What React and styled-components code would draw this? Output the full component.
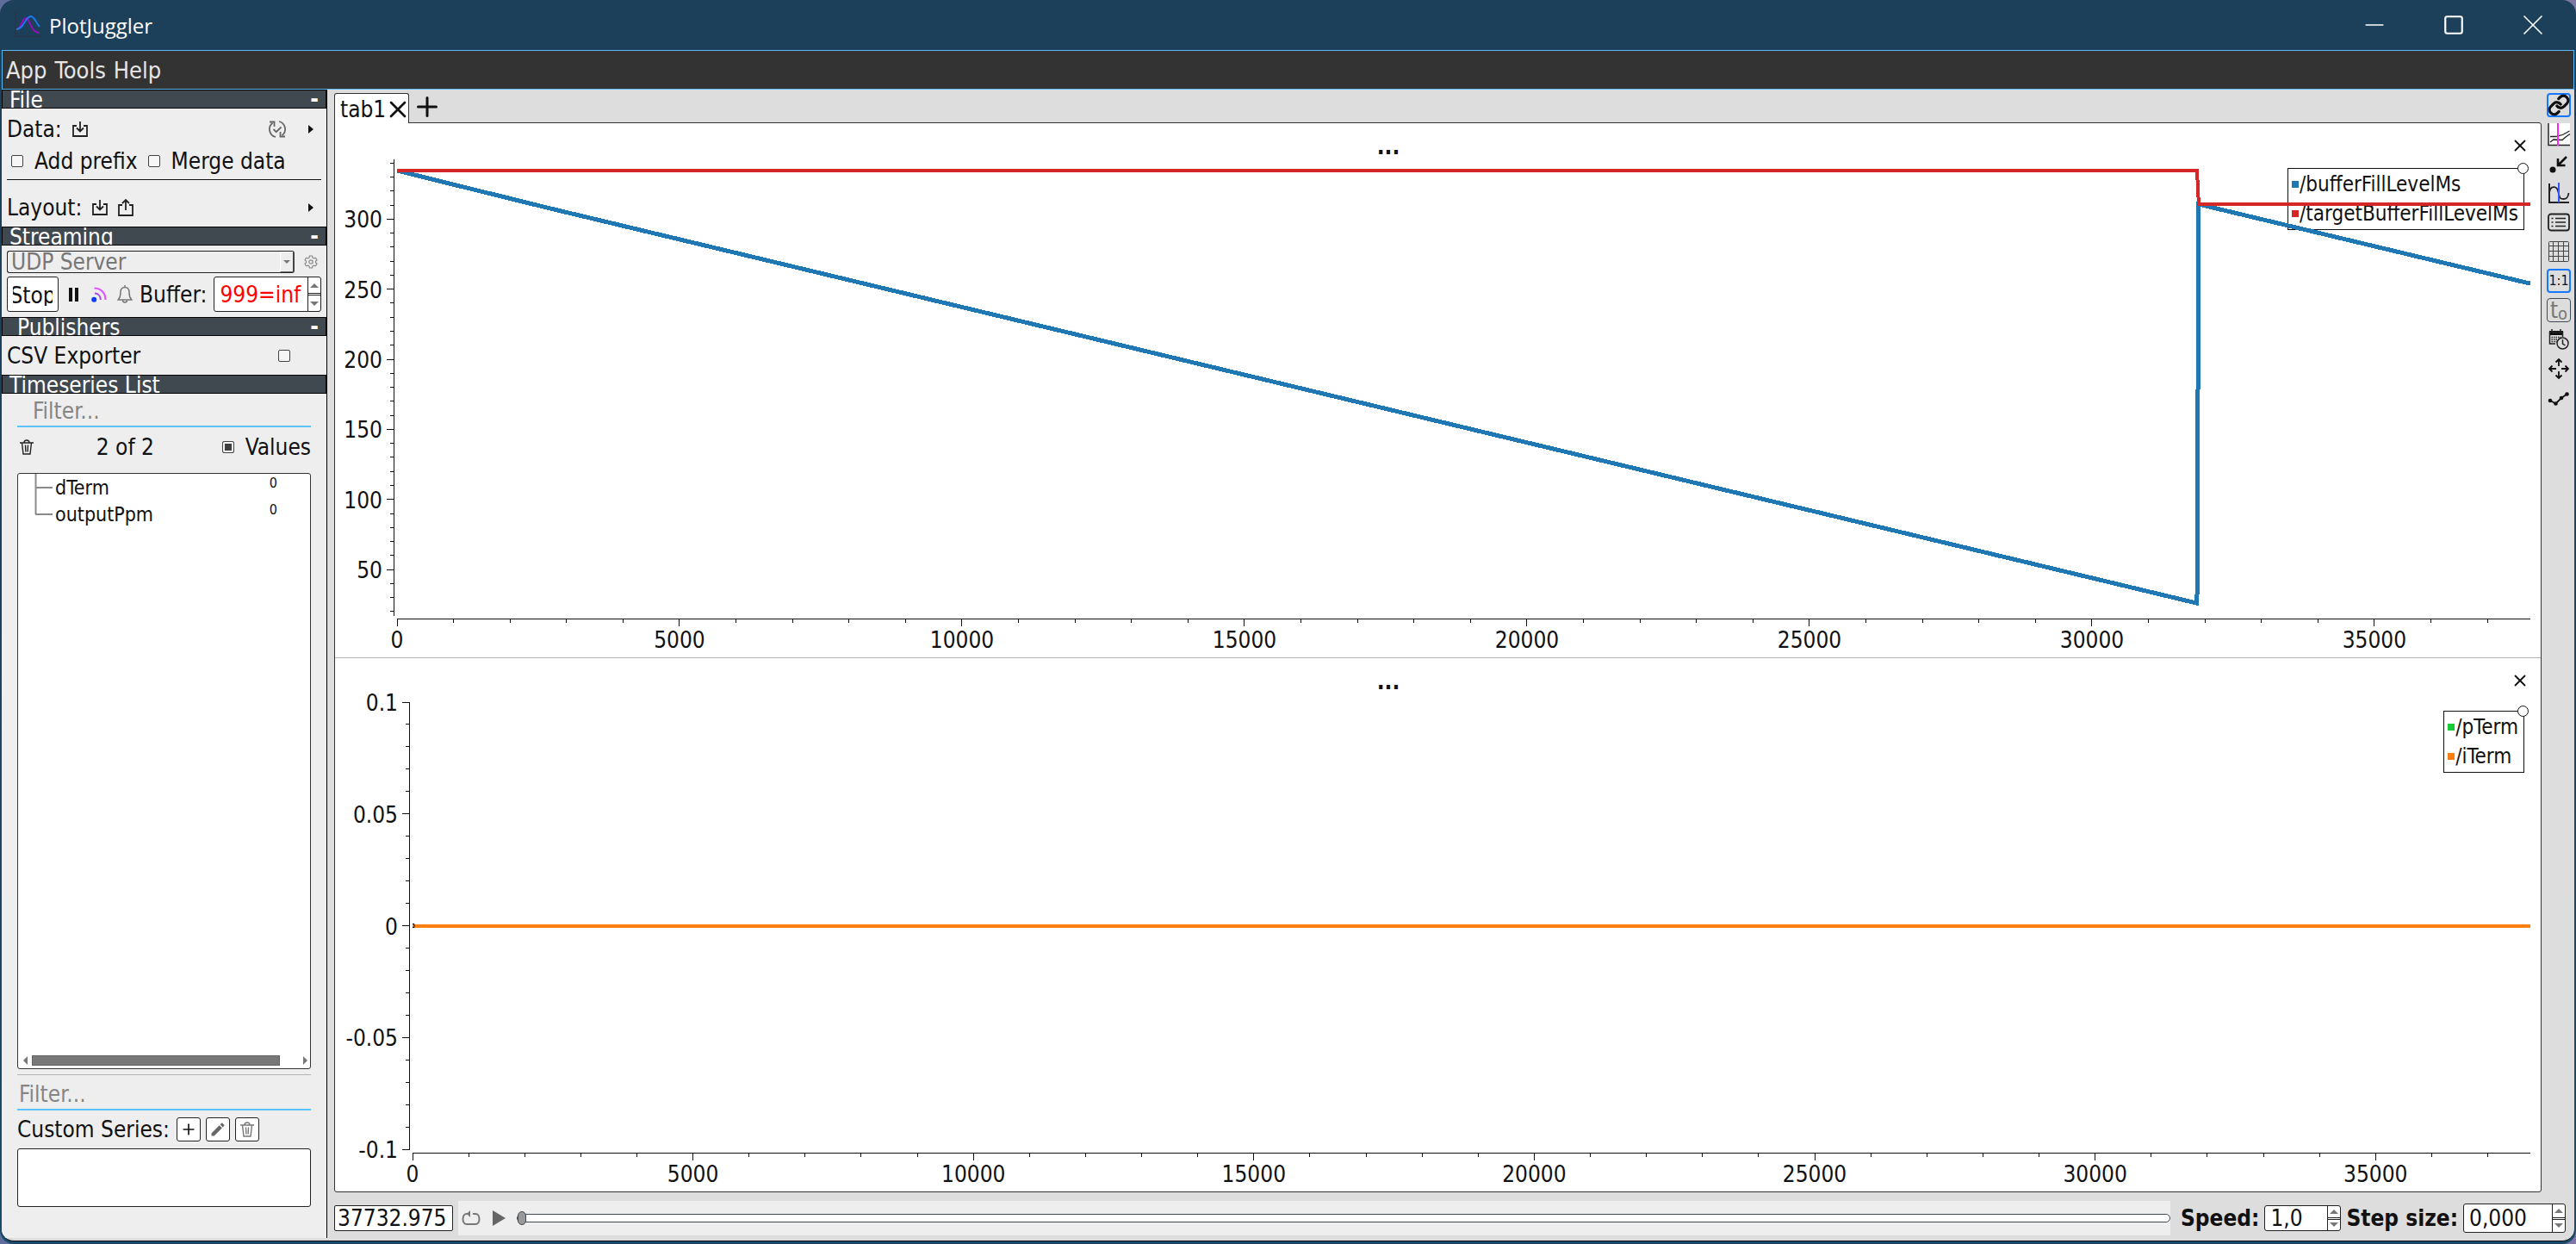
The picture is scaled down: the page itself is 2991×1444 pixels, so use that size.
import React, { useLayoutEffect, useRef, useState } from "react";
import styled, { createGlobalStyle, css } from "styled-components";
import { Link, Minus, Square, X, Plus } from "lucide-react";
import { MdEdit } from "react-icons/md";

const GlobalStyle = createGlobalStyle`
  * {
    box-sizing: border-box;
  }
  body {
    margin: 0;
    background: linear-gradient(90deg, #5f6e9a, #7f76a3);
    color: #111111;
    font-family: "DejaVu Sans Condensed", "Noto Sans", sans-serif;
    font-size: 26px;
    line-height: 32px;
  }
  button, input, select {
    margin: 0;
    color: inherit;
    font: inherit;
  }
`;

const Window = styled.div`
  height: 100vh;
  display: flex;
  flex-direction: column;
  padding: 0 2px 3px;
  border-radius: 16px;
  background: linear-gradient(#1c405a 0, #1c405a 20%, #1a4a6b);
`;

const TitleBar = styled.header`
  height: 58px;
  display: flex;
  align-items: center;
  gap: 7px;
  padding-left: 14px;
  color: #ffffff;
`;

const AppTitle = styled.h1`
  flex: 1;
  margin: 0;
  padding-top: 2px;
  font-family: "Open Sans", "Noto Sans", sans-serif;
  font-size: 24px;
  font-weight: 400;
`;

const IconButton = styled.button`
  display: flex;
  align-items: center;
  justify-content: center;
  padding: 0;
  border: 0;
  background: none;

  svg {
    flex-shrink: 0;
  }
`;

const ControlGroup = styled.div`
  display: flex;
  padding-right: 2px;
`;

const WindowButton = styled(IconButton)`
  width: 92px;
  height: 58px;
`;

const MenuBar = styled.nav`
  height: 46px;
  display: flex;
  align-items: center;
  gap: 9px;
  padding: 2px 4px 0;
  border: 1px solid #5cb8f5;
  background: #333333;
  font-size: 27px;
`;

const MenuItem = styled.button`
  padding: 0;
  border: 0;
  background: none;
  color: #e6e6e6;
`;

const Content = styled.div`
  flex: 1;
  min-height: 0;
  display: flex;
  padding-bottom: 3px;
  border-bottom: 1px solid #111111;
  border-radius: 0 0 14px 14px;
  background: #dddddd;
  overflow: hidden;
`;

const Sidebar = styled.aside`
  width: 378px;
  flex-shrink: 0;
  display: flex;
  flex-direction: column;
  border-right: 1px solid #000000;
  background: #eeeeee;
`;

const SectionHeader = styled.div`
  height: 22px;
  flex-shrink: 0;
  display: flex;
  justify-content: space-between;
  padding: 0 8px;
  padding-left: ${(props) => (props.$indent ? "17px" : "8px")};
  border: 1px solid #000000;
  background: #404850;
  color: #ffffff;
  line-height: 23px;
  overflow: hidden;
`;

const SectionTitle = styled.h2`
  margin: 0;
  font-size: 26px;
  font-weight: 400;
`;

const CollapseButton = styled.button`
  padding: 0;
  border: 0;
  background: none;
  font-weight: 700;
  line-height: 20px;
`;

const SectionBody = styled.div`
  padding: 0 6px;
  padding-bottom: ${(props) => props.$bottom || "0"};
`;

const FileRow = styled.div`
  height: ${(props) => props.$height};
  display: flex;
  align-items: center;
  gap: 12px;
`;

const Spacer = styled.span`
  flex: 1;
`;

const MoreButton = styled.button`
  width: 6px;
  height: 10px;
  margin: 0 9px 0 14px;
  padding: 0;
  border: 5px solid transparent;
  border-left: 6px solid #111111;
  border-right: 0;
  background: none;
`;

const OptionsRow = styled.div`
  height: 26px;
  display: flex;
  align-items: center;
  gap: 12px;
  padding-left: 5px;
`;

const CheckLabel = styled.label`
  display: flex;
  align-items: center;
  gap: 13px;
`;

const Checkbox = styled.input.attrs({ type: "checkbox" })`
  appearance: none;
  width: 14px;
  height: 14px;
  border: 1px solid #444444;
  border-radius: 2px;
  background: #f6f6f6;

  &:checked {
    background: #404040;
    box-shadow: inset 0 0 0 2px #f6f6f6;
  }
`;

const Divider = styled.hr`
  height: 1px;
  margin: 8px 0 10px;
  border: 0;
  background: #111111;
`;

const StreamRow = styled.div`
  display: flex;
  align-items: center;
  gap: 8px;
  padding-top: ${(props) => props.$top};
`;

const SelectBox = styled.div`
  flex: 1;
  display: flex;
  height: 26px;
  border: 1px solid #222222;
  border-right: 2px solid #444444;
  border-radius: 3px;
`;

const SourceSelect = styled.select`
  appearance: none;
  flex: 1;
  min-width: 0;
  height: 24px;
  padding: 0 4px;
  border: 0;
  background: none;
  color: #777777;
  line-height: 24px;
  opacity: 1;
`;

const SelectArrow = styled.span`
  width: 15px;
  display: flex;
  align-items: center;
  justify-content: center;
  border-left: 1px solid #ffffff;
  border-top: 1px solid #ffffff;
  border-bottom: 1px solid #666666;
`;

const Arrow = styled.span`
  width: 0;
  border: ${(props) => props.$size || "5px"} solid transparent;
  ${(props) =>
    props.$up
      ? css`
          border-top: 0;
          border-bottom-color: #777777;
        `
      : css`
          border-bottom: 0;
          border-top-color: #777777;
        `}
`;

const GearButton = styled(IconButton)`
  width: 16px;
  margin: 0 4px 0 3px;
`;

const StopButton = styled.button`
  width: 60px;
  height: 41px;
  display: flex;
  justify-content: center;
  align-items: center;
  padding: 0 6px;
  border: 1px solid #222222;
  border-radius: 3px;
  background: #ffffff;
`;

const StopLabel = styled.span`
  width: 47px;
  height: 26px;
  display: flex;
  justify-content: center;
  line-height: 29px;
  overflow: hidden;
`;

const StreamButtons = styled.div`
  display: flex;
  gap: 12px;
`;

const SmallButton = styled(IconButton)`
  width: 18px;
`;

const SpinBox = styled.div`
  flex: ${(props) => (props.$width ? "none" : "1")};
  width: ${(props) => props.$width || "auto"};
  min-width: 0;
  height: ${(props) => props.$height};
  display: flex;
  border: 1px solid #222222;
  border-radius: 3px;
  background: #ffffff;
`;

const SpinInput = styled.input`
  flex: 1;
  width: 0;
  min-width: 0;
  padding: 0 0 0 6px;
  border: 0;
  background: none;
  color: ${(props) => props.$color || "inherit"};
  outline: 0;
`;

const SpinButtons = styled.div`
  width: 15px;
  display: flex;
  flex-direction: column;
  gap: 1px;
  border-left: 1px solid #222222;
`;

const SpinButton = styled.button`
  flex: 1;
  display: flex;
  align-items: center;
  justify-content: center;
  padding: 0;
  border: 0 solid #222222;
  border-width: ${(props) => (props.$up ? "0 0 1px" : "1px 0 0")};
  background: none;
`;

const PublisherRow = styled.label`
  height: 45px;
  display: flex;
  align-items: center;
  justify-content: space-between;
  padding: 0 36px 0 0;
`;

const ListBody = styled.div`
  flex: 1;
  min-height: 0;
  display: flex;
  flex-direction: column;
  padding: 0 18px 36px;
`;

const FilterInput = styled.input`
  width: 100%;
  height: 39px;
  flex-shrink: 0;
  padding: 2px 0 0 ${(props) => props.$indent};
  border: 0;
  border-bottom: 2px solid #5bc2fb;
  background: none;
  outline: 0;

  &::placeholder {
    color: #858585;
    opacity: 1;
  }
`;

const CountRow = styled.div`
  height: 46px;
  display: flex;
  align-items: center;
  margin-bottom: 7px;
  padding-left: 3px;
`;

const Count = styled.span`
  flex: 1;
  padding-right: 6px;
  text-align: center;
`;

const TreeBox = styled.div`
  flex: 1;
  min-height: 0;
  display: flex;
  flex-direction: column;
  border: 1px solid #333333;
  border-radius: 3px;
  background: #ffffff;
`;

const Tree = styled.ul`
  flex: 1;
  margin: 0;
  padding: 0;
  list-style: none;
  font-size: 23px;
`;

const TreeItem = styled.li`
  height: 31px;
  display: flex;
  align-items: center;
  gap: 2px;
  padding: 0 38px 0 19px;
`;

const TreeValue = styled.span`
  align-self: flex-start;
  margin-left: auto;
  font-size: 16px;
  line-height: 21px;
`;

const ScrollRow = styled.div`
  height: 15px;
  display: flex;
  align-items: center;
  gap: 5px;
  padding: 0 3px 3px 6px;
`;

const ScrollArrow = styled.span`
  border: 5px solid transparent;
  ${(props) =>
    props.$left
      ? css`
          border-left: 0;
          border-right-color: #777777;
        `
      : css`
          border-right: 0;
          border-left-color: #777777;
        `}
`;

const ScrollTrack = styled.div`
  flex: 1;
`;

const ScrollThumb = styled.div`
  width: 93%;
  height: 12px;
  border: 1px solid #606468;
  background: #787878;
`;

const TreeDivider = styled.hr`
  width: 100%;
  height: 1px;
  margin: 6px 0 2px;
  border: 0;
  background: #b4b4b4;
`;

const CustomRow = styled.div`
  display: flex;
  align-items: center;
  gap: 6px;
  padding: 6px 0;
`;

const CustomLabel = styled.span`
  padding-right: 2px;
`;

const SquareButton = styled(IconButton)`
  width: 28px;
  height: 28px;
  border: 1px solid #222222;
  border-radius: 3px;
  background: #ffffff;
`;

const CustomList = styled.div`
  height: 68px;
  flex-shrink: 0;
  border: 1px solid #222222;
  border-radius: 3px;
  background: #ffffff;
`;

const Main = styled.main`
  flex: 1;
  min-width: 0;
  display: flex;
  flex-direction: column;
`;

const Workspace = styled.div`
  flex: 1;
  min-height: 0;
  display: flex;
`;

const Tabs = styled.div`
  flex: 1;
  min-width: 0;
  display: flex;
  flex-direction: column;
  padding-left: 8px;
`;

const TabBar = styled.div`
  height: 38px;
  display: flex;
  align-items: flex-end;
`;

const Tab = styled.div`
  width: 87px;
  height: 35px;
  display: flex;
  align-items: center;
  justify-content: space-between;
  margin-bottom: -1px;
  padding: 2px 2px 0 6px;
  border: 1px solid #333333;
  border-bottom: 0;
  border-radius: 3px 3px 0 0;
  background: #ffffff;
  z-index: 1;
`;

const TabButton = styled.button`
  padding: 0;
  border: 0;
  background: none;
`;

const CloseTabButton = styled(IconButton)`
  width: 20px;
`;

const AddTabButton = styled(IconButton)`
  width: 42px;
  height: 36px;
`;

const Pane = styled.section`
  flex: 1;
  min-height: 0;
  display: flex;
  flex-direction: column;
  border: 1px solid #333333;
  border-radius: 0 3px 3px 3px;
  background: #ffffff;
`;

const PlotPanel = styled.article`
  flex: 1;
  min-height: 0;
  display: flex;
  flex-direction: column;

  & + & {
    border-top: 1px solid #b4b4b4;
  }
`;

const PlotHeader = styled.header`
  height: 40px;
  display: flex;
  align-items: center;
  padding-top: 12px;
`;

const PlotTitle = styled.h3`
  flex: 1;
  margin: 0;
  padding-top: 3px;
  font-size: 26px;
  font-weight: 700;
  line-height: 25px;
  text-align: center;
`;

const PlotActions = styled.div`
  width: 115px;
  display: flex;
  justify-content: flex-end;
  padding-right: 13px;
`;

const ChartBox = styled.div`
  position: relative;
  flex: 1;
  min-height: 0;
`;

const ChartSvg = styled.svg`
  position: absolute;
  inset: 0;
  width: 100%;
  height: 100%;
  font-size: 26px;
  fill: #111111;
`;

const Legend = styled.ul`
  position: absolute;
  top: ${(props) => props.$top}px;
  right: 19px;
  margin: 0;
  padding: 1px 6px 1px 4px;
  border: 1px solid #111111;
  list-style: none;
  font-size: 24px;

  &::after {
    content: "";
    position: absolute;
    top: -7px;
    right: -6px;
    width: 11px;
    height: 11px;
    border: 1px solid #111111;
    border-radius: 50%;
    background: #ffffff;
  }
`;

const LegendItem = styled.li`
  display: flex;
  align-items: center;
  gap: 1px;
  height: 34px;
`;

const Swatch = styled.span`
  width: 8px;
  height: 8px;
  background: ${(props) => props.$color};
`;

const Toolbar = styled.div`
  width: 38px;
  display: flex;
  flex-direction: column;
  align-items: center;
  gap: 6px;
  padding: 4px 0 0 2px;
`;

const ToolButton = styled(IconButton)`
  width: 28px;
  height: 28px;
  border: 0 solid ${(props) => (props.$active ? "#1677ff" : "#3f4a55")};
  border-width: ${(props) =>
    props.$active ? "2px" : props.$framed ? "1px" : "0"};
  border-radius: 4px;
  font-size: 16px;
  color: ${(props) => (props.$framed ? "#777777" : "#111111")};
`;

const Subscript = styled.span`
  display: flex;
  font-size: 26px;
  line-height: 22px;

  sub {
    align-self: flex-end;
    font-size: 20px;
    line-height: 14px;
  }
`;

const PlaybackBar = styled.footer`
  height: 53px;
  display: flex;
  align-items: center;
  gap: 6px;
  padding: 7px 10px 0 8px;
`;

const TimeInput = styled.input`
  width: 138px;
  height: 30px;
  padding: 0 3px;
  border: 1px solid #222222;
  border-radius: 2px;
  background: #ffffff;
`;

const Player = styled.div`
  flex: 1;
  height: 40px;
  display: flex;
  align-items: center;
  gap: 13px;
  padding-left: 4px;
  margin-right: 6px;
  background: #eeeeee;
`;

const TimeSlider = styled.input.attrs({ type: "range" })`
  appearance: none;
  flex: 1;
  height: 16px;
  margin: 0;
  background: none;

  &::-webkit-slider-runnable-track {
    height: 10px;
    border: 1px solid #3f4a55;
    border-radius: 5px;
    background: #ffffff;
  }

  &::-webkit-slider-thumb {
    appearance: none;
    width: 10px;
    height: 16px;
    margin-top: -4px;
    border: 1px solid #3f4a55;
    border-radius: 5px;
    background: #999999;
  }
`;

const BoldLabel = styled.label`
  font-weight: 700;
`;

const LogoIcon = () => (
  <svg width="34" height="34" viewBox="0 0 34 34" fill="none">
    <path d="M2 1v29h30" stroke="#26384b" strokeWidth="2" />
    <path
      d="M3 22c6 0 6-13 11-13s5 17 16 17"
      stroke="#b400c8"
      strokeWidth="1.6"
    />
    <path
      d="M3 22c9 0 10-15 17-15 4 0 6 8 10 12"
      stroke="#1a7cf5"
      strokeWidth="1.8"
    />
  </svg>
);

const ImportIcon = () => (
  <svg width="18" height="18" viewBox="0 0 18 18" fill="none" stroke="#222">
    <path d="M5 5H1v12h16V5h-4" strokeWidth="1.8" />
    <path d="M9 0v11M5 7.5l4 4 4-4" strokeWidth="1.8" />
  </svg>
);

const ExportIcon = () => (
  <svg width="18" height="20" viewBox="0 0 18 20" fill="none" stroke="#222">
    <path d="M5 7H1v12h16V7h-4" strokeWidth="1.8" />
    <path d="M9 13V2M5 5l4-4 4 4" strokeWidth="1.8" />
  </svg>
);

const ReloadIcon = () => (
  <svg width="20" height="20" viewBox="0 0 20 20" fill="none" stroke="#666">
    <path
      d="M8 19A9.200 9.200 0 0 1 4.500 2.800M12 1A9.200 9.200 0 0 1 15.500 17.200"
      strokeWidth="1.8"
    />
    <path d="M1 1.500h5.500V7M19 18.500h-5.500V13" strokeWidth="1.800" />
    <path d="M5.500 10l3.200 3.200L14.500 7.500" strokeWidth="1.8" />
  </svg>
);

const GearIcon = () => (
  <svg width="16" height="16" viewBox="0 0 16 16" fill="none" stroke="#8a8a8a">
    <path
      d="M6.500 1h3l.5 2 1.500.9 2-.6 1.500 2.500-1.500 1.400v1.600l1.500 1.400-1.500 2.500-2-.6-1.500.9-.5 2h-3l-.5-2-1.500-.9-2 .6L1 10.200l1.500-1.400V7.200L1 5.800l1.500-2.500 2 .6L6 3z"
      strokeWidth="1.2"
      strokeLinejoin="round"
    />
    <circle cx="8" cy="8" r="2.200" strokeWidth="1.2" />
  </svg>
);

const PauseIcon = () => (
  <svg width="12" height="18" viewBox="0 0 12 18" fill="#111">
    <path d="M1 1h4v16H1zM8 1h4v16H8z" />
  </svg>
);

const FeedIcon = () => (
  <svg width="18" height="18" viewBox="0 0 18 18" fill="none">
    <path
      d="M3.500 1.500C11 1.500 16.500 7 16.500 15"
      stroke="#e055ff"
      strokeWidth="2.200"
    />
    <path d="M4 7.500c4 0 6.800 3 6.800 7.500" stroke="#a64be8" strokeWidth="2" />
    <circle cx="3.200" cy="14.800" r="3" fill="#0a3cff" />
  </svg>
);

const BellIcon = () => (
  <svg width="18" height="21" viewBox="0 0 18 21" fill="none" stroke="#777">
    <path
      d="M9 2.500C5.500 2.500 4 5 4 8.500c0 5-1 6.500-2.800 8.500h15.600C15 15 14 13.500 14 8.500 14 5 12.500 2.500 9 2.500zM9 0v2.500"
      strokeWidth="1.500"
    />
    <path d="M6.500 17.500a2.500 2.500 0 0 0 5 0" strokeWidth="1.500" />
  </svg>
);

const TrashIcon = ({ color }) => (
  <svg width="16" height="18" viewBox="0 0 16 18" fill="none" stroke={color}>
    <path
      d="M0 4h16M2.500 4l1.500 13h8l1.500-13M5 4c0-4 6-4 6 0M6.500 6.500l.4 8M9.500 6.500l-.4 8"
      strokeWidth="1.400"
    />
  </svg>
);

const Branch = ({ last }) => (
  <svg width="22" height="31" viewBox="0 0 22 31" stroke="#8a8a8a">
    <path d={last ? "M1.500 0v16" : "M1.500 0v31"} strokeWidth="2" />
    <path d="M1 16h20" strokeWidth="2" />
  </svg>
);

const LoopIcon = () => (
  <svg width="22" height="18" viewBox="0 0 22 18" fill="none" stroke="#777">
    <path d="M13 4h3c6 0 6 12 0 12H6c-6 0-6-12 0-12h4" strokeWidth="2" />
    <path d="M6 4l4-4v8z" fill="#777" stroke="none" />
  </svg>
);

const PlayIcon = () => (
  <svg width="16" height="18" viewBox="0 0 16 18" fill="#666">
    <path d="M1 0l15 9-15 9z" />
  </svg>
);

const ToolIcon = ({ children }) => (
  <svg width="28" height="28" viewBox="0 0 28 28" fill="none" stroke="#222">
    {children}
  </svg>
);

const tools = [
  {
    name: "Link axes",
    active: true,
    icon: <Link size={26} strokeWidth={3} />,
  },
  {
    name: "Time tracker",
    icon: (
      <ToolIcon>
        <path d="M1 1h26v26H1z" fill="#fff" stroke="none" />
        <path d="M2 1v25.500h25" strokeWidth="1.500" />
        <path
          d="M4 16.500h7l8.500-2.500 7-4M4 23l4-3 10 .5 4-3.500 5-3.500"
          strokeWidth="1.300"
        />
        <path d="M13 1v26" stroke="#f02af0" strokeWidth="2" />
      </ToolIcon>
    ),
  },
  {
    name: "Reference point",
    icon: (
      <ToolIcon>
        <circle cx="7" cy="21" r="3.500" fill="#111" stroke="none" />
        <path d="M23 6l-9 9M13 8v8h8.500" stroke="#111" strokeWidth="2.600" />
      </ToolIcon>
    ),
  },
  {
    name: "Curve tracker",
    icon: (
      <ToolIcon>
        <path d="M3 3v22h23" strokeWidth="2" />
        <path
          d="M3 14c1-9 9-9 10.500-1s2.500 8 6.500 8 5-3 5.500-7"
          strokeWidth="1.800"
        />
        <path d="M14 2v23" stroke="#3355ff" strokeWidth="2" />
      </ToolIcon>
    ),
  },
  {
    name: "Legend",
    icon: (
      <ToolIcon>
        <rect x="2" y="4.500" width="24" height="19" rx="3" strokeWidth="1.800" />
        <path
          d="M10 9.500h12M10 14h12M10 18.500h12M5.500 9.500h2M5.500 14h2M5.500 18.500h2"
          strokeWidth="1.700"
        />
      </ToolIcon>
    ),
  },
  {
    name: "Grid",
    icon: (
      <ToolIcon>
        <rect x="2.500" y="2.500" width="23" height="23" rx="1" stroke="#444" />
        <path
          d="M7.500 2.500v23M13.500 2.500v23M19.500 2.500v23M2.500 7.500h23M2.500 13.500h23M2.500 19.500h23"
          stroke="#444"
        />
      </ToolIcon>
    ),
  },
  { name: "Keep ratio", active: true, icon: "1:1" },
  {
    name: "Time offset",
    framed: true,
    icon: (
      <Subscript>
        t<sub>o</sub>
      </Subscript>
    ),
  },
  {
    name: "Date and time",
    icon: (
      <ToolIcon>
        <path d="M3 4h16v5H3z" fill="#111" stroke="none" />
        <path d="M10 19H3.500V5.500h15V11M6 2v3M16 2v3" strokeWidth="1.500" />
        <path
          d="M5.500 11.500h11M5.500 14h8M5.500 16.500h6"
          strokeWidth="1.500"
          strokeDasharray="1.5 1"
        />
        <circle cx="18.500" cy="18.500" r="6.500" fill="#ddd" strokeWidth="1.500" />
        <path d="M18.500 14v5l3 2" strokeWidth="1.500" />
      </ToolIcon>
    ),
  },
  {
    name: "Zoom to fit",
    icon: (
      <ToolIcon>
        <path
          d="M14 3v8M14 17v8M3 14h8M17 14h8M10.500 6.500L14 3l3.500 3.500M10.500 21.500L14 25l3.500-3.500M6.500 10.500L3 14l3.500 3.500M21.500 10.500L25 14l-3.500 3.500"
          stroke="#111"
          strokeWidth="1.800"
        />
      </ToolIcon>
    ),
  },
  {
    name: "Line style",
    icon: (
      <ToolIcon>
        <path
          d="M4 17l6.500 3.500L17 14l6.500-4.500"
          stroke="#111"
          strokeWidth="1.800"
        />
        <g fill="#111" stroke="none">
          <circle cx="4" cy="17" r="2.300" />
          <circle cx="10.500" cy="20.500" r="2.300" />
          <circle cx="17" cy="14" r="2.300" />
          <circle cx="23.500" cy="9.500" r="2.300" />
        </g>
      </ToolIcon>
    ),
  },
];

const X_MAX = 37760;

const plots = [
  {
    left: 68,
    top: 2,
    bottom: 45,
    legendTop: 12,
    yMin: 17.5,
    yMax: 342.6,
    yStep: 10,
    labelEvery: 5,
    series: [
      {
        name: "/bufferFillLevelMs",
        color: "#1f77b4",
        width: 5,
        points: [
          [0, 334.6],
          [2670, 308],
          [7900, 257.5],
          [31860, 26],
          [31890, 310.6],
          [X_MAX, 254],
        ],
      },
      {
        name: "/targetBufferFillLevelMs",
        color: "#d62728",
        width: 4,
        points: [
          [0, 334.6],
          [31860, 334.6],
          [31890, 310.6],
          [X_MAX, 310.6],
        ],
      },
    ],
  },
  {
    left: 86,
    top: 11,
    bottom: 46,
    legendTop: 21,
    yMin: -0.1,
    yMax: 0.1,
    yStep: 0.01,
    labelEvery: 5,
    marker: true,
    series: [
      {
        name: "/pTerm",
        color: "#1ac938",
        width: 4,
        points: [
          [0, 0],
          [X_MAX, 0],
        ],
      },
      {
        name: "/iTerm",
        color: "#ff7f0e",
        width: 4,
        points: [
          [0, 0],
          [X_MAX, 0],
        ],
      },
    ],
  },
];

const useSize = () => {
  const ref = useRef(null);
  const [size, setSize] = useState({ width: 0, height: 0 });

  useLayoutEffect(() => {
    const node = ref.current;
    const update = () =>
      setSize({ width: node.clientWidth, height: node.clientHeight });
    update();
    const observer = new ResizeObserver(update);
    observer.observe(node);
    return () => observer.disconnect();
  }, []);

  return [ref, size];
};

const ticks = (min, max, step, labelEvery) => {
  const result = [];
  const first = Math.ceil(min / step - 0.001);
  const last = Math.floor(max / step + 0.001);
  for (let i = first; i <= last; i++) {
    result.push({
      value: i * step,
      label: i % labelEvery === 0 ? String(+(i * step).toFixed(2)) : null,
    });
  }
  return result;
};

const Chart = ({ plot }) => {
  const [ref, { width, height }] = useSize();
  const x0 = plot.left + 4;
  const x1 = width - 12;
  const axisY = height - plot.bottom;
  const y0 = axisY - 4;
  const toX = (value) => x0 + (value / X_MAX) * (x1 - x0);
  const toY = (value) =>
    y0 - ((value - plot.yMin) / (plot.yMax - plot.yMin)) * (y0 - plot.top);
  const xTicks = ticks(0, X_MAX, 1000, 5);
  const yTicks = ticks(plot.yMin, plot.yMax, plot.yStep, plot.labelEvery);

  return (
    <ChartBox ref={ref}>
      <Legend $top={plot.legendTop}>
        {plot.series.map((line) => (
          <LegendItem key={line.name}>
            <Swatch $color={line.color} />
            {line.name}
          </LegendItem>
        ))}
      </Legend>
      {width > 0 && (
        <ChartSvg>
          <g stroke="#111111" shapeRendering="crispEdges">
            <path d={`M${plot.left} ${plot.top}V${y0 + 1}`} />
            <path d={`M${x0} ${axisY}H${x1}`} />
            {yTicks.map(({ value, label }) => (
              <path
                key={value}
                d={`M${plot.left} ${toY(value)}h${label ? -8 : -4}`}
              />
            ))}
            {xTicks.map(({ value, label }) => (
              <path
                key={value}
                d={`M${toX(value)} ${axisY}v${label ? 9 : 5}`}
              />
            ))}
          </g>
          <g textAnchor="end">
            {yTicks
              .filter(({ label }) => label)
              .map(({ value, label }) => (
                <text key={value} x={plot.left - 13} y={toY(value) + 10}>
                  {label}
                </text>
              ))}
          </g>
          <g textAnchor="middle">
            {xTicks
              .filter(({ label }) => label)
              .map(({ value, label }) => (
                <text key={value} x={toX(value)} y={axisY + 34}>
                  {label}
                </text>
              ))}
          </g>
          <g fill="none" shapeRendering="crispEdges">
            {plot.series.map((line) => (
              <polyline
                key={line.name}
                stroke={line.color}
                strokeWidth={line.width}
                points={line.points
                  .map(([x, y]) => `${toX(x)},${toY(y)}`)
                  .join(" ")}
              />
            ))}
          </g>
          {plot.marker && (
            <path
              d={`M${x0} ${toY(0) - 2}h2v4h-2`}
              fill="none"
              stroke="#111111"
            />
          )}
        </ChartSvg>
      )}
    </ChartBox>
  );
};

const Section = ({ title, indent, collapsible = true }) => (
  <SectionHeader $indent={indent}>
    <SectionTitle>{title}</SectionTitle>
    {collapsible && <CollapseButton>-</CollapseButton>}
  </SectionHeader>
);

const Spin = ({ id, value, color, width, height }) => (
  <SpinBox $width={width} $height={height}>
    <SpinInput id={id} defaultValue={value} $color={color} />
    <SpinButtons>
      <SpinButton $up aria-label="Increase">
        <Arrow $up />
      </SpinButton>
      <SpinButton aria-label="Decrease">
        <Arrow />
      </SpinButton>
    </SpinButtons>
  </SpinBox>
);

const SidePanel = () => {
  return (
    <Sidebar>
      <Section title="File" />
      <SectionBody>
        <FileRow $height="48px">
          <span>Data:</span>
          <IconButton aria-label="Load data">
            <ImportIcon />
          </IconButton>
          <Spacer />
          <IconButton aria-label="Reload data">
            <ReloadIcon />
          </IconButton>
          <MoreButton aria-label="Recent data" />
        </FileRow>
        <OptionsRow>
          <CheckLabel>
            <Checkbox />
            Add prefix
          </CheckLabel>
          <CheckLabel>
            <Checkbox />
            Merge data
          </CheckLabel>
        </OptionsRow>
        <Divider />
        <FileRow $height="44px">
          <span>Layout:</span>
          <IconButton aria-label="Load layout">
            <ImportIcon />
          </IconButton>
          <IconButton aria-label="Save layout">
            <ExportIcon />
          </IconButton>
          <Spacer />
          <MoreButton aria-label="Recent layouts" />
        </FileRow>
      </SectionBody>

      <Section title="Streaming" />
      <SectionBody $bottom="6px">
        <StreamRow $top="6px">
          <SelectBox>
            <SourceSelect aria-label="Streaming source" disabled>
              <option>UDP Server</option>
            </SourceSelect>
            <SelectArrow>
              <Arrow $size="4px" />
            </SelectArrow>
          </SelectBox>
          <GearButton aria-label="Streaming options">
            <GearIcon />
          </GearButton>
        </StreamRow>
        <StreamRow $top="4px">
          <StopButton>
            <StopLabel>Stop</StopLabel>
          </StopButton>
          <StreamButtons>
            <SmallButton aria-label="Pause">
              <PauseIcon />
            </SmallButton>
            <SmallButton aria-label="Streaming active">
              <FeedIcon />
            </SmallButton>
            <SmallButton aria-label="Notifications">
              <BellIcon />
            </SmallButton>
          </StreamButtons>
          <label htmlFor="buffer">Buffer:</label>
          <Spin id="buffer" value="999=inf" color="#ff0000" height="41px" />
        </StreamRow>
      </SectionBody>

      <Section title="Publishers" indent />
      <SectionBody>
        <PublisherRow>
          CSV Exporter
          <Checkbox />
        </PublisherRow>
      </SectionBody>

      <Section title="Timeseries List" collapsible={false} />
      <ListBody>
        <FilterInput
          $indent="18px"
          placeholder="Filter..."
          aria-label="Filter timeseries"
        />
        <CountRow>
          <IconButton aria-label="Delete timeseries">
            <TrashIcon color="#222" />
          </IconButton>
          <Count>2 of 2</Count>
          <CheckLabel>
            <Checkbox defaultChecked />
            Values
          </CheckLabel>
        </CountRow>
        <TreeBox>
          <Tree>
            <TreeItem>
              <Branch />
              dTerm
              <TreeValue>0</TreeValue>
            </TreeItem>
            <TreeItem>
              <Branch last />
              outputPpm
              <TreeValue>0</TreeValue>
            </TreeItem>
          </Tree>
          <ScrollRow>
            <ScrollArrow $left />
            <ScrollTrack>
              <ScrollThumb />
            </ScrollTrack>
            <ScrollArrow />
          </ScrollRow>
        </TreeBox>
        <TreeDivider />
        <FilterInput
          $indent="2px"
          placeholder="Filter..."
          aria-label="Filter custom series"
        />
        <CustomRow>
          <CustomLabel>Custom Series:</CustomLabel>
          <SquareButton aria-label="Add custom series">
            <Plus size={20} strokeWidth={2} />
          </SquareButton>
          <SquareButton aria-label="Edit custom series">
            <MdEdit size={20} color="#666" />
          </SquareButton>
          <SquareButton aria-label="Delete custom series">
            <TrashIcon color="#777" />
          </SquareButton>
        </CustomRow>
        <CustomList />
      </ListBody>
    </Sidebar>
  );
};

const Playback = () => (
  <PlaybackBar>
    <TimeInput defaultValue="37732.975" aria-label="Current time" />
    <Player>
      <IconButton aria-label="Loop">
        <LoopIcon />
      </IconButton>
      <IconButton aria-label="Play">
        <PlayIcon />
      </IconButton>
      <TimeSlider defaultValue="0" aria-label="Time" />
    </Player>
    <BoldLabel htmlFor="speed">Speed:</BoldLabel>
    <Spin id="speed" value="1,0" width="89px" height="30px" />
    <BoldLabel htmlFor="step">Step size:</BoldLabel>
    <Spin id="step" value="0,000" width="119px" height="34px" />
  </PlaybackBar>
);

const App = () => {
  return (
    <>
      <GlobalStyle />
      <Window>
        <TitleBar>
          <LogoIcon />
          <AppTitle>PlotJuggler</AppTitle>
          <ControlGroup>
            <WindowButton aria-label="Minimize">
              <Minus size={34} strokeWidth={1} color="#fff" />
            </WindowButton>
            <WindowButton aria-label="Maximize">
              <Square size={26} strokeWidth={2} color="#fff" />
            </WindowButton>
            <WindowButton aria-label="Close">
              <X size={40} strokeWidth={1} color="#fff" />
            </WindowButton>
          </ControlGroup>
        </TitleBar>
        <MenuBar>
          <MenuItem>App</MenuItem>
          <MenuItem>Tools</MenuItem>
          <MenuItem>Help</MenuItem>
        </MenuBar>
        <Content>
          <SidePanel />
          <Main>
            <Workspace>
              <Tabs>
                <TabBar>
                  <Tab>
                    <TabButton>tab1</TabButton>
                    <CloseTabButton aria-label="Close tab">
                      <X size={32} strokeWidth={2} />
                    </CloseTabButton>
                  </Tab>
                  <AddTabButton aria-label="Add tab">
                    <Plus size={36} strokeWidth={2} />
                  </AddTabButton>
                </TabBar>
                <Pane>
                  {plots.map((plot) => (
                    <PlotPanel key={plot.left}>
                      <PlotHeader>
                        <PlotTitle>...</PlotTitle>
                        <PlotActions>
                          <IconButton aria-label="Close plot">
                            <X size={22} strokeWidth={2} />
                          </IconButton>
                        </PlotActions>
                      </PlotHeader>
                      <Chart plot={plot} />
                    </PlotPanel>
                  ))}
                </Pane>
              </Tabs>
              <Toolbar>
                {tools.map((tool) => (
                  <ToolButton
                    key={tool.name}
                    aria-label={tool.name}
                    $active={tool.active}
                    $framed={tool.framed}
                  >
                    {tool.icon}
                  </ToolButton>
                ))}
              </Toolbar>
            </Workspace>
            <Playback />
          </Main>
        </Content>
      </Window>
    </>
  );
};

export default App;
